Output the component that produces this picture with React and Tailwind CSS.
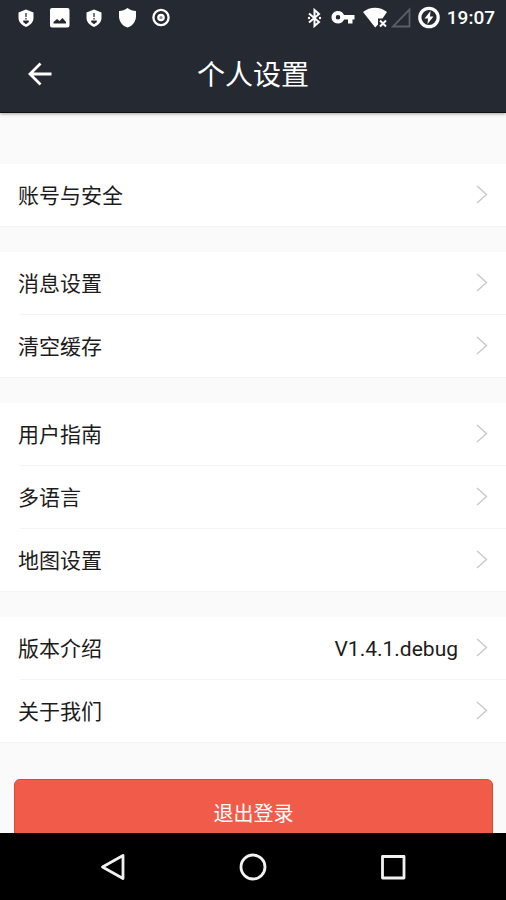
const groups = [
  [{ label: '账号与安全' }],
  [{ label: '消息设置' }, { label: '清空缓存' }],
  [{ label: '用户指南' }, { label: '多语言' }, { label: '地图设置' }],
  [{ label: '版本介绍', value: 'V1.4.1.debug' }, { label: '关于我们' }],
];

function AlertShield() {
  return (
    <svg className="h-6 w-6" viewBox="0 0 24 24" aria-hidden="true">
      <path d="M12 3.500 L19.500 6.500 V12 C19.500 16 16 19.500 12 21 C8 19.500 4.500 16 4.500 12 V6.500 Z" fill="#fff" />
      <path d="M12 7V11M12 12V13.500" stroke="#3c4048" strokeWidth="1.400" />
      <path d="M9.200 14.500H14.800V16L12 18.200L9.200 16Z" fill="#252932" />
    </svg>
  );
}

function PictureIcon() {
  return (
    <svg className="h-6 w-6" viewBox="0 0 24 24" aria-hidden="true">
      <rect x="2" y="2" width="19.500" height="19.500" rx="2" fill="#fff" />
      <path d="M5.500 17.500V16L9 13L11.500 15L14.500 12L18 16V17.500Z" fill="#252932" />
    </svg>
  );
}

function ShieldIcon() {
  return (
    <svg className="h-6 w-6" viewBox="0 0 24 24" aria-hidden="true">
      <path d="M11.500 2 C14 4 17 4.800 20 5 V10 C20 15.500 17 19.500 11.500 21.500 C6 19.500 3 15.500 3 10 V5 C6 4.800 9 4 11.500 2Z" fill="#fff" />
    </svg>
  );
}

function RecordIcon() {
  return (
    <svg className="h-6 w-6" viewBox="0 0 24 24" aria-hidden="true">
      <circle cx="11" cy="11.500" r="7.600" fill="none" stroke="#fff" strokeWidth="2.300" />
      <circle cx="11" cy="11.500" r="3.800" fill="#fff" />
      <circle cx="11" cy="11.500" r="1.600" fill="#8b8e93" />
    </svg>
  );
}

function BluetoothIcon() {
  return (
    <svg className="h-6 w-4" viewBox="0 0 16 24" fill="none" stroke="#fff" strokeWidth="2" aria-hidden="true">
      <path d="M2 7.500L12 16L7.500 20V4L12 8L2 16.500" />
      <circle cx="2" cy="12" r="1.200" fill="#fff" stroke="none" />
      <circle cx="13" cy="12" r="1.200" fill="#fff" stroke="none" />
    </svg>
  );
}

function KeyIcon() {
  return (
    <svg className="h-6 w-6" viewBox="0 0 24 24" aria-hidden="true">
      <path
        fillRule="evenodd"
        fill="#fff"
        d="M13 9H23.500V13.500H21.500V17.500H17V13.500H13C12 16 9.800 17.500 7 17.500C3.500 17.500 .5 14.800 .5 11.300S3.500 5.100 7 5.100C9.800 5.100 12 6.600 13 9ZM7 9A2.300 2.300 0 1 0 7 13.600A2.300 2.300 0 1 0 7 9Z"
      />
    </svg>
  );
}

function WifiIcon() {
  return (
    <svg className="h-6 w-6" viewBox="0 0 24 24" aria-hidden="true">
      <path d="M0 6C7 .2 17 .2 24 6L19.500 12.500H15V18.500L12.200 21.500Z" fill="#fff" />
      <path d="M17 14.500L23 20.500M23 14.500L17 20.500" stroke="#fff" strokeWidth="2" />
    </svg>
  );
}

function SignalIcon() {
  return (
    <svg className="h-6 w-5" viewBox="0 0 20 24" aria-hidden="true">
      <path d="M2 20.500H18.500V3.500Z" fill="none" stroke="#5b5e64" strokeWidth="1.800" />
    </svg>
  );
}

function BatteryIcon() {
  return (
    <svg className="h-6 w-6" viewBox="0 0 24 24" aria-hidden="true">
      <circle cx="12" cy="11.500" r="9.200" fill="none" stroke="#fff" strokeWidth="3.200" />
      <path d="M13.500 5L7.500 12.500H11L10.500 18L16.500 10.500H13Z" fill="#fff" />
    </svg>
  );
}

function Chevron() {
  return (
    <svg className="h-5 w-3 shrink-0" viewBox="0 0 12 20" fill="none" aria-hidden="true">
      <path d="M1 1L10.500 9.500L1 18" stroke="#c9c9c9" strokeWidth="1.400" />
    </svg>
  );
}

function StatusBar() {
  return (
    <div className="flex h-9 items-center justify-between pr-[11px] pl-[14px]">
      <div className="flex items-center gap-[10px]">
        <AlertShield />
        <PictureIcon />
        <AlertShield />
        <ShieldIcon />
        <RecordIcon />
      </div>
      <div className="flex items-center">
        <div className="flex items-center gap-2">
          <BluetoothIcon />
          <KeyIcon />
          <WifiIcon />
        </div>
        <div className="ml-1 flex items-center gap-[6px]">
          <SignalIcon />
          <BatteryIcon />
          <span className="text-[19px] leading-6 font-medium">19:07</span>
        </div>
      </div>
    </div>
  );
}

function Row({ label, value }) {
  return (
    <li className="group">
      <button type="button" className="flex w-full flex-col text-left">
        <span className="flex h-[62px] w-full items-center px-[18px]">
          <span className="flex-1 pt-[3px]">{label}</span>
          {value && <span className="mr-[18px] pt-[3px]">{value}</span>}
          <Chevron />
        </span>
        <span className="ml-5 h-px self-stretch bg-[#f4f4f4] group-last:ml-0" />
      </button>
    </li>
  );
}

export default function App() {
  return (
    <div className="flex h-screen flex-col bg-[#fafafa] font-[Roboto,'Noto_Sans_CJK_SC',sans-serif] text-[21px] text-[#1c1c1c]">
      <header className="z-10 shrink-0 border-b border-[#0e1014] bg-[#252932] text-white shadow-[0_1px_3px_rgba(0,0,0,0.35)]">
        <StatusBar />
        <div className="grid h-[76px] grid-cols-[80px_1fr_80px] items-center">
          <button type="button" aria-label="返回" className="flex h-full items-center justify-center">
            <svg className="h-6 w-6" viewBox="0 0 24 24" fill="none" stroke="#fff" strokeWidth="2.800" aria-hidden="true">
              <path d="M12.500 1.500L2 12L12.500 22.500M2 12H23.500" />
            </svg>
          </button>
          <h1 className="pt-1 text-center text-[28px] leading-10">个人设置</h1>
        </div>
      </header>

      <main className="min-h-0 flex-1 overflow-y-auto pt-[51px] [scrollbar-width:none]">
        <div className="flex flex-col gap-[25px]">
          {groups.map((rows) => (
            <ul key={rows[0].label} className="bg-white">
              {rows.map((row) => (
                <Row key={row.label} {...row} />
              ))}
            </ul>
          ))}
        </div>
        <div className="pt-9 pr-[13px] pb-9 pl-[14px]">
          <button
            type="button"
            className="h-[66px] w-full rounded-md border border-[#e0492f] bg-[#f15b4a] pt-1 text-[20px] text-white"
          >
            退出登录
          </button>
        </div>
      </main>

      <nav className="flex h-[67px] shrink-0 items-center justify-center gap-[112px] bg-black">
        <button type="button" aria-label="后退">
          <svg className="h-7 w-7" viewBox="0 0 28 28" fill="none" stroke="#f2f2f2" strokeWidth="2.800" strokeLinejoin="round" aria-hidden="true">
            <path d="M24 2.500V25.500L3.500 14Z" />
          </svg>
        </button>
        <button type="button" aria-label="主屏幕">
          <svg className="h-7 w-7" viewBox="0 0 28 28" fill="none" stroke="#f2f2f2" strokeWidth="2.800" aria-hidden="true">
            <circle cx="14" cy="14" r="12" />
          </svg>
        </button>
        <button type="button" aria-label="最近任务">
          <svg className="h-7 w-7" viewBox="0 0 28 28" fill="none" stroke="#f2f2f2" strokeWidth="2.800" strokeLinejoin="round" aria-hidden="true">
            <rect x="3.500" y="3.500" width="21.500" height="21.500" />
          </svg>
        </button>
      </nav>
    </div>
  );
}
